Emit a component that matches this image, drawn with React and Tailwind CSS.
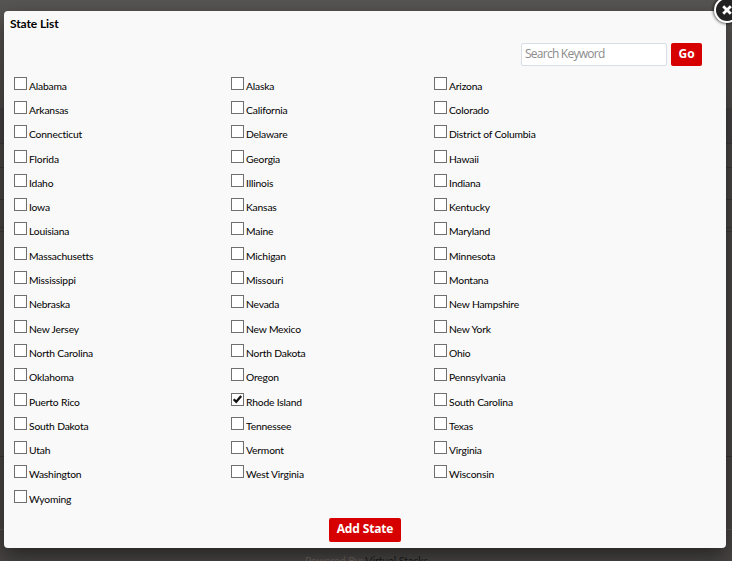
import React from 'react';

const states = [
  'Alabama', 'Alaska', 'Arizona', 'Arkansas', 'California', 'Colorado', 'Connecticut', 'Delaware', 'District of Columbia',
  'Florida', 'Georgia', 'Hawaii', 'Idaho', 'Illinois', 'Indiana', 'Iowa', 'Kansas', 'Kentucky', 'Louisiana', 'Maine',
  'Maryland', 'Massachusetts', 'Michigan', 'Minnesota', 'Mississippi', 'Missouri', 'Montana', 'Nebraska', 'Nevada',
  'New Hampshire', 'New Jersey', 'New Mexico', 'New York', 'North Carolina', 'North Dakota', 'Ohio', 'Oklahoma', 'Oregon',
  'Pennsylvania', 'Puerto Rico', 'Rhode Island', 'South Carolina', 'South Dakota', 'Tennessee', 'Texas', 'Utah', 'Vermont',
  'Virginia', 'Washington', 'West Virginia', 'Wisconsin', 'Wyoming',
];

function StateOption({ name, checked }) {
  return (
    <label className="flex items-start gap-[2px]">
      <span className="flex size-[13px] shrink-0 items-center justify-center border border-[#6f6f6f] bg-white">
        {checked && (
          <svg className="size-[11px]" viewBox="0 0 11 11">
            <path d="M1.7 5.2 4.2 7.8 9.2 2" fill="none" stroke="#111" strokeWidth="2.3" />
          </svg>
        )}
      </span>
      <span className="whitespace-nowrap pt-[3px] text-[10.3px] leading-[13px] tracking-[-0.18px]">{name}</span>
    </label>
  );
}

export default function App() {
  return (
    <div className="grid h-[561px] w-[732px] overflow-hidden bg-gradient-to-b from-[#575553] via-[#484543] via-25% to-[#474442] font-['Lato',sans-serif] text-black">
      {/* Dimmed page behind the dialog */}
      <div className="col-start-1 row-start-1 flex h-[561px] flex-col overflow-hidden">
        <div className="h-[108px] shrink-0" />
        <div className="h-[36px] shrink-0 border-b border-[#3a3837] bg-[#424040]" />
        <div className="h-[24px] shrink-0 border-b border-[#3a3837]" />
        <div className="h-[32px] shrink-0 border-b border-[#3a3837]" />
        <div className="h-[28px] shrink-0 border-b border-[#3a3837]" />
        <div className="h-[4px] shrink-0 border-b border-[#3a3837]" />
        <div className="h-[225px] shrink-0 border-b border-[#363433]" />
        <div className="h-[73px] shrink-0 border-b border-[#555250]" />
        <p className="shrink-0 whitespace-nowrap pl-[305px] pt-[24px] text-[10.5px] leading-[14px] text-[#69605b]">
          Powered By: <span className="text-[#1b1918]">Virtual Stacks</span>
        </p>
      </div>

      <div className="relative col-start-1 row-start-1 ml-1 mt-[11px] flex h-[537px] w-[722px] flex-col items-center rounded-[4px] bg-[#f9f9f9] px-[6px] pt-[5px] shadow-[0_8px_20px_rgba(0,0,0,0.45)]">
        <h1 className="w-full text-[12px] font-bold leading-4 tracking-[-0.1px]">State List</h1>
        <div className="flex h-[34px] w-full items-stretch justify-end gap-1 pr-[18px] pt-[11px] font-['Open_Sans',sans-serif]">
          <input
            className="w-[146px] rounded-[2px] border border-[#d8dee6] bg-white px-[3px] pb-px text-[12px] leading-4 tracking-[-0.75px] outline-none placeholder:text-[#8b8b8b]"
            placeholder="Search Keyword"
          />
          <button className="w-[31px] rounded-[2px] bg-[#d60000] pb-px text-[12px] font-bold text-white">Go</button>
        </div>
        <div className="grid h-[452px] w-full auto-rows-[24.3px] grid-cols-[217px_203px_200px] content-start pl-1 pt-[10.67px]">
          {states.map((name) => (
            <StateOption key={name} name={name} checked={name === 'Rhode Island'} />
          ))}
        </div>
        <div className="flex h-6 w-[72px] rounded-[2px] bg-[#d60000]">
          <button className="h-[22px] w-full font-['Open_Sans',sans-serif] text-[12px] font-bold leading-[22px] tracking-[-0.15px] text-white">
            Add State
          </button>
        </div>
        <button aria-label="Close" className="absolute -right-[14px] -top-[14px] flex size-[26px] items-center justify-center rounded-full border-2 border-white bg-[#222] shadow-[0_0_3px_1px_rgba(0,0,0,0.6)]">
          <svg className="size-[10px]" viewBox="0 0 10 10">
            <path d="M1.2 1.2 8.8 8.8M8.8 1.2 1.2 8.8" stroke="#fff" strokeWidth="2.8" />
          </svg>
        </button>
      </div>
    </div>
  );
}
